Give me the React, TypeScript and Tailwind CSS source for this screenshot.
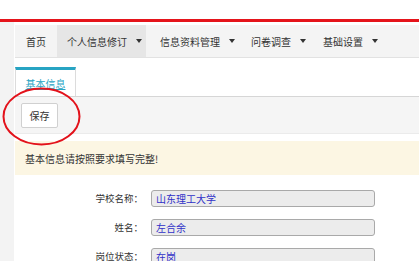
import React from 'react';

const font = { fontFamily: '"Noto Sans CJK SC", "Noto Sans", sans-serif' };

function Caret() {
  return (
    <span className="ml-[9px] inline-block h-0 w-0 border-l-[3px] border-r-[3px] border-t-[4px] border-l-transparent border-r-transparent border-t-[#333]" />
  );
}

const fields = [
  { label: '学校名称：', value: '山东理工大学' },
  { label: '姓名：', value: '左合余' },
  { label: '岗位状态：', value: '在岗' },
];

export default function App() {
  return (
    <div
      className="relative h-[261px] w-[419px] overflow-hidden bg-white text-[10px] text-[#333]"
      style={font}
    >
      <div className="h-[19px] bg-white" />
      <div className="h-[3px] bg-[#e5141b]" />
      <div className="flex">
        <div className="w-[14px] shrink-0 bg-[#f3f3f3]" />
        <div className="flex-1 pl-px">
          {/* top menu */}
          <div className="mt-[3px] flex h-[33px] items-stretch border-b border-[#e2e2e2] bg-[#f4f4f4]">
            <div className="flex w-[42px] items-center justify-center">首页</div>
            <div className="flex w-[89px] items-center bg-[#e6e6e6] pl-[10px]">
              个人信息修订
              <Caret />
            </div>
            <div className="flex w-[94px] items-center pl-[14px]">
              信息资料管理
              <Caret />
            </div>
            <div className="flex w-[72px] items-center pl-[11px]">
              问卷调查
              <Caret />
            </div>
            <div className="flex flex-1 items-center pl-[11px]">
              基础设置
              <Caret />
            </div>
          </div>

          {/* tabs */}
          <div className="mt-[9px] flex">
            <div className="flex h-[29px] w-[61px] items-center justify-center border-x border-t-[3px] border-[#dcdcdc] border-t-[#27a4c3] text-[#27a4c3] underline">
              基本信息
            </div>
          </div>

          {/* toolbar */}
          <div className="h-[38px] border-t border-b border-[#d6d6d6] border-b-[#ebebeb] bg-[#f5f5f5] pl-[6px] pt-[6px]">
            <button className="h-[25px] w-[37px] rounded-[2px] border border-[#d0d0d0] bg-white text-[10px] text-[#333]">
              保存
            </button>
          </div>

          {/* alert */}
          <div className="mt-[7px] flex h-[34px] items-center bg-[#fcf6e3] pl-[10px]">
            基本信息请按照要求填写完整!
          </div>

          {/* form */}
          <div className="mt-[15px] flex flex-col gap-[12px]">
            {fields.map((f) => (
              <div key={f.label} className="flex items-center">
                <div className="w-[128px] text-right text-[9.5px]">{f.label}</div>
                <div className="ml-[8px] flex h-[17px] w-[224px] items-center rounded-[3px] border border-[#a9a9a9] bg-[#ececec] pl-[4px] text-[#3030c8]">
                  {f.value}
                </div>
              </div>
            ))}
          </div>
        </div>
      </div>

      {/* hand-drawn red circle around the save button */}
      <svg
        className="absolute left-[2px] top-[87px]"
        width="79"
        height="59"
        viewBox="0 0 79 59"
      >
        <ellipse cx="39.5" cy="29.5" rx="38" ry="28" fill="none" stroke="#e3121b" strokeWidth="2" />
      </svg>
    </div>
  );
}
